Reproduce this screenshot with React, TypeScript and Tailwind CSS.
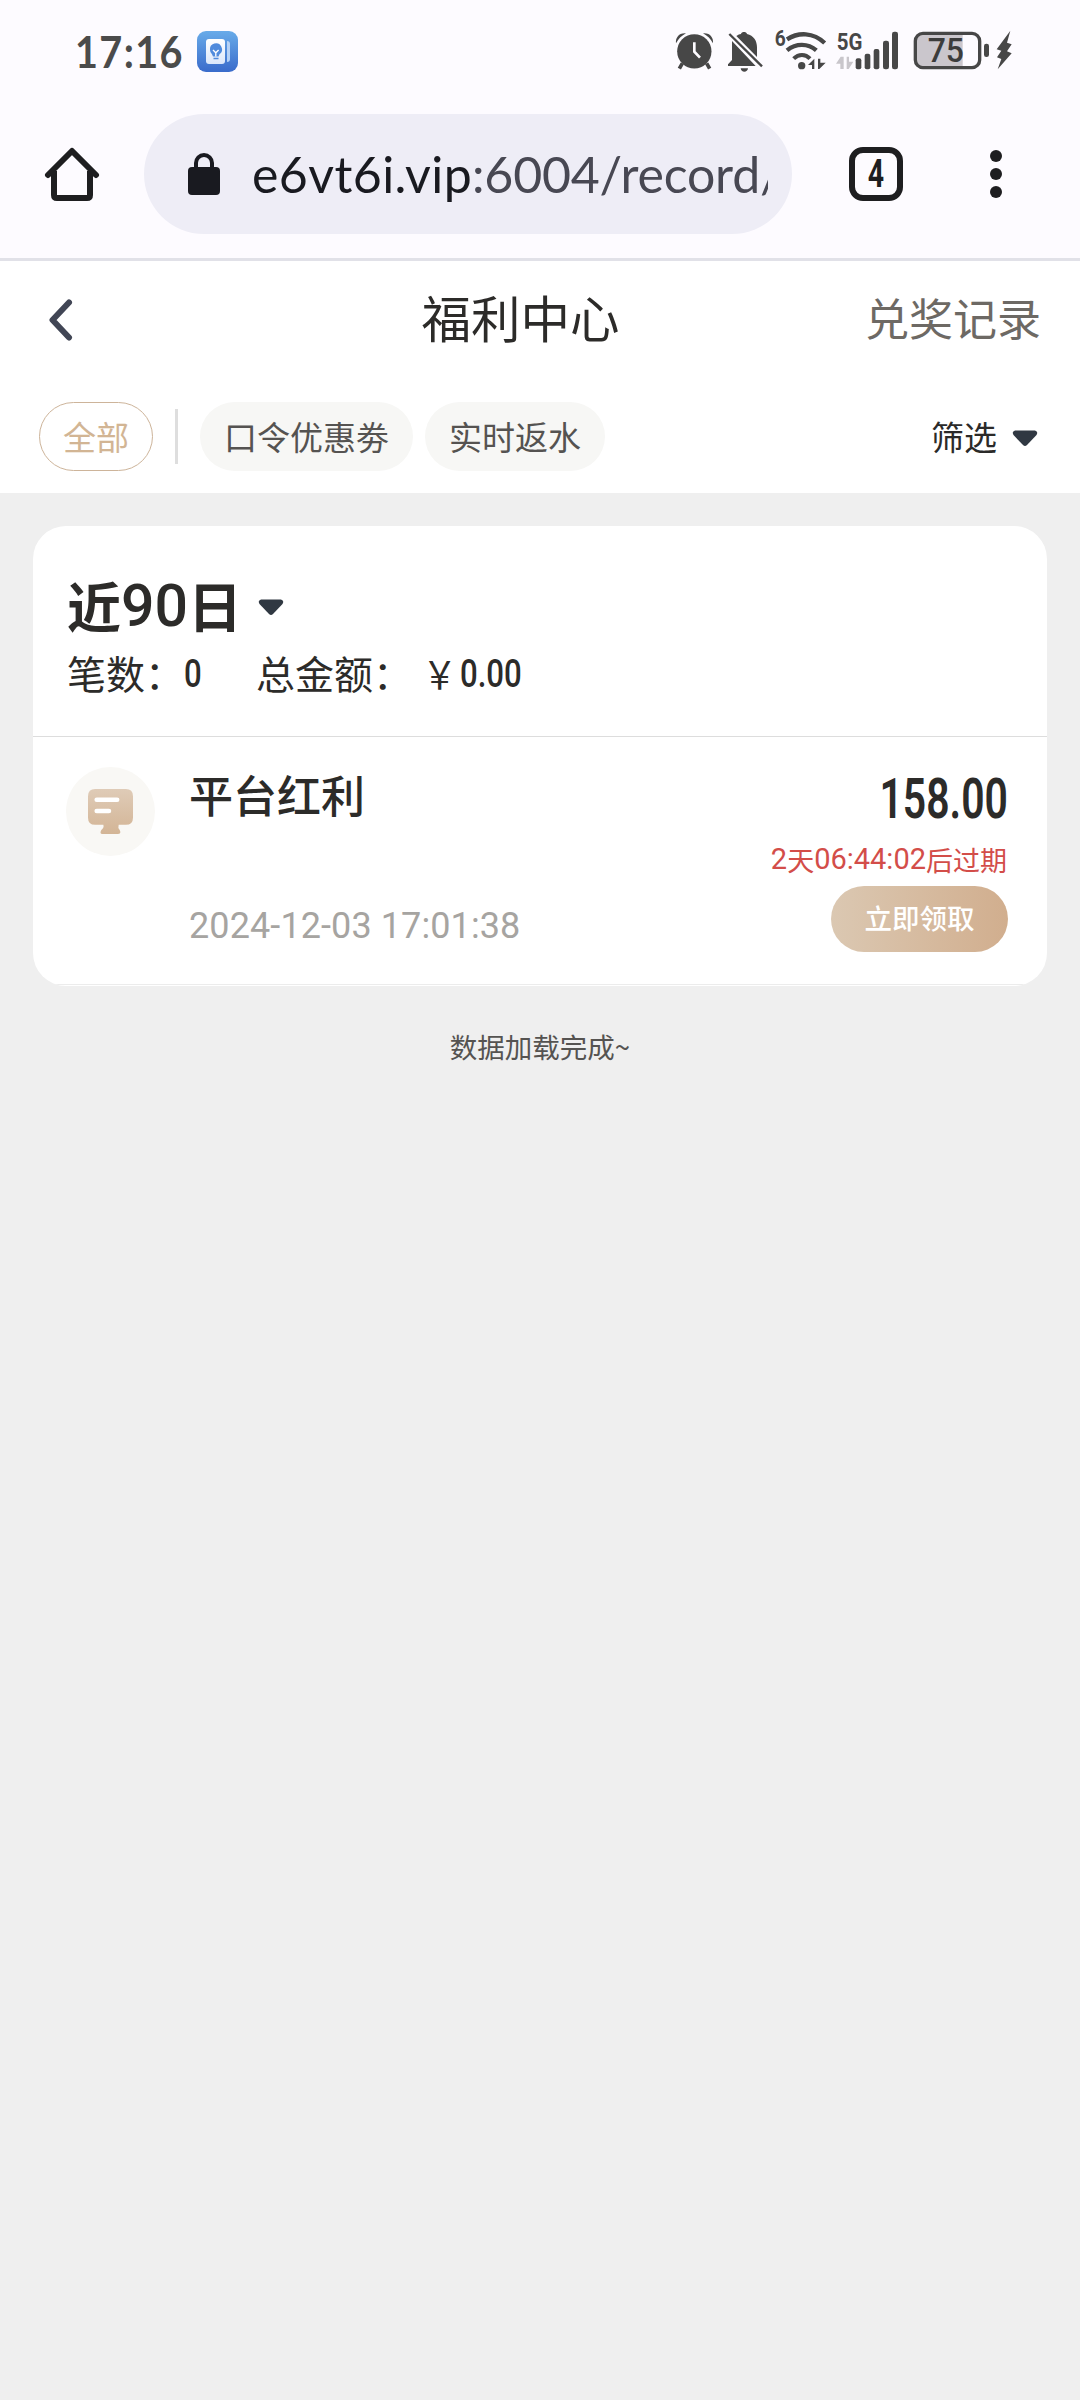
import React from "react";

const ink = "#474747";

function AlarmIcon() {
  return (
    <svg className="h-[44px] w-[40px]" viewBox="45 60 120 132" fill="none">
      <circle cx="103" cy="124" r="51.5" fill={ink} />
      <path d="M48 100C46 84 56 68 78 70C65 77 56 86 48 100Z" fill={ink} />
      <path d="M159 100C161 84 151 68 129 70C142 77 151 86 159 100Z" fill={ink} />
      <path d="M67 160L58 176M140 160L149 176" stroke={ink} strokeWidth="11" />
      <path d="M103 97V125L120 143" stroke="#fdfbff" strokeWidth="8" />
    </svg>
  );
}

function BellOffIcon() {
  return (
    <svg className="h-[44px] w-[37px]" viewBox="201 60 111 132" fill="none">
      <path
        d="M216 93L287 168H204V163L216 150ZM229 78C234 74 239 73 243 72C245 64 259 64 261 72C281 77 291 92 291 112V141Z"
        fill={ink}
      />
      <path d="M208 72L306 169" stroke={ink} strokeWidth="7" />
      <path d="M242 175H264C263 189 243 189 242 175Z" fill={ink} />
    </svg>
  );
}

function WifiIcon() {
  return (
    <svg className="h-[44px] w-[53px] overflow-visible" viewBox="342 60 159 132" fill="none">
      <text x="344" y="109" fontFamily="Roboto" fontWeight="700" fontSize="66" textLength="33" lengthAdjust="spacingAndGlyphs" fill={ink}>6</text>
      <path d="M381 88C415 66 460 66 494 99" stroke={ink} strokeWidth="13" />
      <path d="M381 121C408 99 444 99 469 121" stroke={ink} strokeWidth="13" />
      <path d="M401 146C416 131 436 131 450 146" stroke={ink} strokeWidth="12" />
      <circle cx="425" cy="167" r="11" fill={ink} />
      <path d="M444 165L463 146V177H456V165ZM474 146H481V158H497L478 177H474Z" fill={ink} />
    </svg>
  );
}

function SignalIcon() {
  return (
    <svg className="h-[44px] w-[65px] overflow-visible" viewBox="525 60 195 132">
      <text x="530" y="121" fontFamily="Roboto" fontWeight="700" fontSize="74" textLength="77" lengthAdjust="spacingAndGlyphs" fill={ink}>5G</text>
      <path d="M528 161L542 140H551V177H541V161ZM560 140H567V155H580L566 177H560Z" fill="#c9c6cb" />
      <g fill={ink}>
        <rect x="587" y="145" width="17" height="33" rx="6" />
        <rect x="614" y="131" width="17" height="47" rx="6" />
        <rect x="641" y="117" width="17" height="61" rx="6" />
        <rect x="669" y="92" width="18" height="86" rx="7" />
        <rect x="696" y="65" width="18" height="113" rx="7" />
      </g>
    </svg>
  );
}

function BatteryIcon() {
  return (
    <svg className="h-[44px] w-[78px] overflow-visible" viewBox="756 60 234 132">
      <path d="M908 75V168H790Q770 168 770 148V95Q770 75 790 75Z" fill="#cac6cc" />
      <rect x="766" y="70" width="193" height="103" rx="23" fill="none" stroke={ink} strokeWidth="10" />
      <rect x="972" y="101" width="15" height="40" rx="7" fill={ink} />
      <text x="803" y="157" fontFamily="Roboto" fontWeight="500" fontSize="101" textLength="109" lengthAdjust="spacingAndGlyphs" fill="#3c3c3c">75</text>
    </svg>
  );
}

function BoltIcon() {
  return (
    <svg className="h-[44px] w-[16px]" viewBox="1008 60 48 132" fill={ink}>
      <path d="M1051 62L1010 118L1024 122L1011 142L1024 147L1013 178L1055 130L1041 124L1055 103L1041 98Z" />
    </svg>
  );
}

function NotesAppIcon() {
  return (
    <svg className="h-[42px] w-[42px]" viewBox="0 0 42 42">
      <defs>
        <linearGradient id="app" x1="0" y1="0" x2="0" y2="1">
          <stop offset="0" stopColor="#68abe9" />
          <stop offset="1" stopColor="#3a6bcb" />
        </linearGradient>
        <linearGradient id="leaf" x1="0" y1="0" x2="0" y2="1">
          <stop offset="0" stopColor="#fff" />
          <stop offset="1" stopColor="#dbe7fa" />
        </linearGradient>
      </defs>
      <rect width="41" height="41" rx="9" fill="url(#app)" />
      <rect x="9" y="8" width="19" height="25" rx="3" fill="url(#leaf)" />
      <path d="M30 10Q33 10 33 13V28Q33 31 30 31Z" fill="#b6d2f6" />
      <path d="M13 19A6 6 0 1 1 22.5 23.200L21.500 25.500H16L15 23.200Q13 21.500 13 19Z" fill="#4f8bdc" />
      <path d="M16.500 27.500H21.500" stroke="#4f8bdc" strokeWidth="1.500" />
      <path d="M16 19L18.800 21.800L21.600 19M18.800 21.500V25.500" stroke="#fff" strokeWidth="1.300" fill="none" />
    </svg>
  );
}

function Caret() {
  return (
    <svg className="h-[17px] w-[26px]" viewBox="0 0 26 17">
      <path d="M3 0.500H23Q26.500 1.500 24.500 5L15 15Q13 17 11 15L1.500 5Q-0.500 1.500 3 0.500Z" fill="#303842" />
    </svg>
  );
}

function StatusBar() {
  return (
    <div className="flex h-[100px] items-start pl-[75px] pt-[30px]">
      <div className="flex h-[42px] w-[122px] origin-left scale-x-[0.900] items-center font-['Lato'] text-[44px] font-bold leading-none tracking-[1.500px] text-[#4b4b4b]">
        17:16
      </div>
      <div className="mt-px">
        <NotesAppIcon />
      </div>
      <div className="ml-[436px] flex">
        <AlarmIcon />
        <div className="ml-[12px]"><BellOffIcon /></div>
        <div className="ml-[10px]"><WifiIcon /></div>
        <div className="ml-[8px]"><SignalIcon /></div>
        <div className="ml-[12px]"><BatteryIcon /></div>
        <div className="ml-[6px]"><BoltIcon /></div>
      </div>
    </div>
  );
}

function BrowserBar() {
  return (
    <div className="flex h-[161px] items-start border-b-[3px] border-[#e1e1e8] pl-[44px] pt-[14px]">
      <div className="flex h-[120px] w-[100px] items-center">
        <svg className="h-[56px] w-[56px]" viewBox="0 0 56 56" fill="none" stroke="#1e1e20" strokeWidth="6">
          <path d="M4 29L28 5L52 29" strokeLinecap="round" strokeLinejoin="round" />
          <path d="M10 25V49Q10 52 13 52H43Q46 52 46 49V25" />
        </svg>
      </div>
      <div className="flex h-[120px] w-[648px] items-center rounded-full bg-[#eeedf6] pl-[44px] pr-[24px]">
        <svg className="h-[42px] w-[32px] shrink-0" viewBox="0 0 32 42">
          <rect y="14" width="32" height="28" rx="4" fill="#191a20" />
          <path d="M8 15V10A8 8 0 0 1 24 10V15" fill="none" stroke="#191a20" strokeWidth="4" />
        </svg>
        <div className="ml-[32px] flex-1 overflow-hidden whitespace-nowrap font-['Lato'] text-[50px] leading-[70px] tracking-[0.4px] text-[#191a20]">
          e6vt6i.vip<span className="tracking-[-0.200px] text-[#484853]">:6004/record/</span>
        </div>
      </div>
      <div className="ml-[57px] mt-[33px] flex h-[54px] w-[54px] items-center justify-center rounded-[14px] border-[6px] border-[#1e1e20]">
        <span className="scale-x-75 font-['Roboto'] text-[38px] font-bold leading-none text-[#1e1e20]">4</span>
      </div>
      <div className="ml-[87px] mt-[36px] flex flex-col gap-[6px]">
        <i className="h-[12px] w-[12px] rounded-full bg-[#1e1e20]" />
        <i className="h-[12px] w-[12px] rounded-full bg-[#1e1e20]" />
        <i className="h-[12px] w-[12px] rounded-full bg-[#1e1e20]" />
      </div>
    </div>
  );
}

function PageHeader() {
  return (
    <header className="bg-white">
      <div className="flex h-[114px] items-center justify-between px-[39px]">
        <div className="w-[137px] pl-[8px] pt-[3px]">
          <svg className="h-[44px] w-[26px]" viewBox="0 0 26 44" fill="none">
            <path d="M22 4.500L5.500 22L22 39.500" stroke="#414655" strokeWidth="6" strokeLinejoin="round" strokeLinecap="round" />
          </svg>
        </div>
        <h1 className="pb-[3px] text-[49.500px] leading-none text-[#2c2b29]">福利中心</h1>
        <span className="pb-[3px] text-[44px] leading-none text-[#6d6964]">兑奖记录</span>
      </div>
      <div className="flex h-[118px] items-start pl-[39px] pt-[27px] text-[33px] leading-none">
        <div className="flex h-[69px] w-[114px] items-center justify-center rounded-full border border-[#cdb49a] text-[#d2b594]">全部</div>
        <div className="ml-[22px] mt-[7px] h-[55px] w-[3px] bg-[#dedede]" />
        <div className="ml-[22px] flex h-[69px] w-[213px] items-center justify-center rounded-full bg-[#f7f7f5] text-[#555351]">口令优惠劵</div>
        <div className="ml-[12px] flex h-[69px] w-[180px] items-center justify-center rounded-full bg-[#f7f7f5] text-[#555351]">实时返水</div>
        <div className="ml-[326px] flex h-[69px] items-center text-[#2b2a29]">
          筛选
          <div className="ml-[15px] pt-[4px]"><Caret /></div>
        </div>
      </div>
    </header>
  );
}

function RecordCard() {
  return (
    <section className="mx-[33px] mt-[33px] h-[460px] overflow-hidden rounded-[33px] bg-white text-[#2c2b29]">
      <div className="h-[211px] border-b border-[#dddddd] pl-[34px] pt-[50px]">
        <div className="flex h-[58px] items-center text-[54px] font-bold leading-none">
          近<span className="font-['Roboto'] text-[59px] font-medium">90</span>日
          <div className="ml-[16px] pt-[4px]"><Caret /></div>
        </div>
        <div className="mt-[16px] flex h-[44px] items-center text-[39px] leading-none">
          笔数：
          <span className="w-[72px] origin-left scale-x-[0.820] pt-[4px] font-['Roboto'] text-[38px] font-medium">0</span>
          总金额：
          <span className="ml-[8px] w-[40px] scale-x-[0.880]">￥</span>
          <span className="origin-left scale-x-[0.820] pt-[4px] font-['Roboto'] text-[38px] font-medium">0.00</span>
        </div>
      </div>
      <div className="flex h-[248px] border-b border-[#ececec] pl-[33px] pr-[39px] pt-[30px]">
        <div className="flex h-[89px] w-[89px] items-center justify-center rounded-full bg-[#f9f8f5] pb-[1px] pr-[1px]">
          <svg className="h-[47px] w-[47px]" viewBox="0 0 46 46">
            <defs>
              <linearGradient id="screen" x1="0" y1="0" x2="0" y2="1">
                <stop offset="0" stopColor="#dfcbb7" />
                <stop offset="1" stopColor="#d3b596" />
              </linearGradient>
            </defs>
            <path
              d="M8 1H38Q45 1 45 8V29Q45 36 38 36H31Q30 39 32 41Q34 45 30 45H15Q12 45 14 41Q17 39 16 36H8Q1 36 1 29V8Q1 1 8 1Z"
              fill="url(#screen)"
            />
            <path d="M9.500 11.500H29.500M9.500 22.500H21.500" stroke="#fff" strokeWidth="4.500" strokeLinecap="round" />
          </svg>
        </div>
        <div className="ml-[34px] flex flex-1 flex-col">
          <div className="mt-[3px] h-[48px] text-[44px] font-medium leading-[48px]">平台红利</div>
          <div className="mt-[86px] font-['Roboto'] text-[36px] leading-[44px] tracking-[0.100px] text-[#a6a4a1]">2024-12-03 17:01:38</div>
        </div>
        <div className="flex flex-col items-end">
          <div className="mt-[4px] h-[56px] origin-right scale-x-[0.730] font-['Roboto'] text-[56px] font-semibold leading-[56px]">158.00</div>
          <div className="mt-[14px] flex h-[36px] items-center pr-px text-[27px] leading-none text-[#d34d49]">
            <span className="font-['Roboto'] text-[29px]">2</span>天
            <span className="font-['Roboto'] text-[29px]">06:44:02</span>后过期
          </div>
          <div className="mt-[9px] flex h-[66px] w-[177px] items-center justify-center rounded-full bg-gradient-to-r from-[#dbc8b2] to-[#d1ae8e] pb-[2px] text-[27.500px] font-medium leading-none text-white">
            立即领取
          </div>
        </div>
      </div>
    </section>
  );
}

export default function App() {
  return (
    <div lang="zh-CN" className="h-[2400px] w-[1080px] overflow-hidden bg-[#efefef] font-['Noto_Sans_CJK_SC',sans-serif]">
      <div className="bg-[#fdfbff]">
        <StatusBar />
        <BrowserBar />
      </div>
      <PageHeader />
      <RecordCard />
      <p className="mt-[43px] text-center text-[27.500px] leading-[34px] text-[#555351]">数据加载完成~</p>
    </div>
  );
}
